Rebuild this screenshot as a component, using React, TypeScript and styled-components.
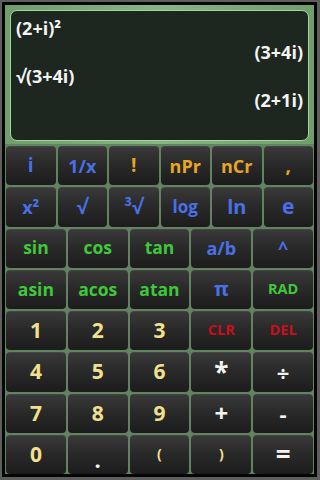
import React from "react";
import styled, { createGlobalStyle } from "styled-components";

const Global = createGlobalStyle`
  html, body { margin: 0; padding: 0; background: #5e5e5e; }
  body { font-family: "Open Sans", "DejaVu Sans", sans-serif; }
`;

const Outer = styled.div`
  width: 320px;
  height: 480px;
  box-sizing: border-box;
  padding: 2px 3px 3px 2px;
  background: #5e5e5e;
`;

const Frame = styled.div`
  height: 100%;
  box-sizing: border-box;
  padding: 3px;
  background: #050505;
`;

const Body = styled.div`
  height: 100%;
  display: flex;
  flex-direction: column;
  background: #62835f;
`;

const DisplayWrap = styled.div`
  height: 139px;
  flex: none;
  box-sizing: border-box;
  padding: 5px 5px 3px 5px;
  background: linear-gradient(90deg, #6f9d6c, #86b482 50%, #6f9d6c);
`;

const Screen = styled.div`
  height: 100%;
  box-sizing: border-box;
  border-radius: 7px;
  border: 1px solid #a6d4a0;
  background: #1d271f;
  padding: 5px 5px 0 5px;
  display: flex;
  flex-direction: column;
`;

const Line = styled.div<{ $right?: boolean }>`
  height: 24px;
  line-height: 24px;
  font-size: 18px;
  font-weight: 700;
  color: #f4f4f4;
  text-align: ${(p) => (p.$right ? "right" : "left")};
  white-space: nowrap;
`;

const Keypad = styled.div`
  flex: 1;
  display: flex;
  flex-direction: column;
  gap: 2px;
  padding: 2px 1px 0 1px;
  background: #62835f;
`;

const Row = styled.div<{ $cols: number }>`
  flex: 1;
  display: grid;
  grid-template-columns: repeat(${(p) => p.$cols}, 1fr);
  gap: 2px;
`;

const colors: Record<string, string> = {
  blue: "#4a6fe6",
  gold: "#e8a624",
  green: "#3fc83a",
  red: "#c8101c",
  cream: "#f2e08e",
  white: "#f4f4f4",
};

const Key = styled.button<{ $c: string; $size: number; $low?: boolean }>`
  all: unset;
  display: flex;
  align-items: center;
  justify-content: center;
  box-sizing: border-box;
  padding-top: ${(p) => (p.$low ? "9px" : "0")};
  border-radius: 4px;
  background: linear-gradient(180deg, #3a3a3a 0%, #2a2a2a 45%, #1c1c1c 100%);
  box-shadow: inset 0 1px 0 rgba(255, 255, 255, 0.06);
  color: ${(p) => colors[p.$c]};
  font-family: "Open Sans", "DejaVu Sans", sans-serif;
  font-weight: 700;
  font-size: ${(p) => p.$size}px;
  line-height: 1;
`;

type K = [string, string, number?];

const rows: K[][] = [
  [["i", "blue", 19], ["1/x", "blue", 18], ["!", "gold", 19], ["nPr", "gold", 18], ["nCr", "gold", 18], [",", "gold", 19]],
  [["x²", "blue", 18], ["√", "blue", 20], ["³√", "blue", 20], ["log", "blue", 17], ["ln", "blue", 20], ["e", "blue", 21]],
  [["sin", "green", 17.5], ["cos", "green", 17.5], ["tan", "green", 17.5], ["a/b", "blue", 18], ["^", "blue", 18]],
  [["asin", "green", 17.5], ["acos", "green", 17.5], ["atan", "green", 17.5], ["π", "blue", 20], ["RAD", "green", 14.5]],
  [["1", "cream", 21], ["2", "cream", 21], ["3", "cream", 21], ["CLR", "red", 14.5], ["DEL", "red", 14.5]],
  [["4", "cream", 21], ["5", "cream", 21], ["6", "cream", 21], ["*", "white", 26], ["÷", "white", 22]],
  [["7", "cream", 21], ["8", "cream", 21], ["9", "cream", 21], ["+", "white", 24], ["-", "white", 22]],
  [["0", "cream", 21], [".", "white", 22], ["(", "cream", 14], [")", "cream", 14], ["=", "white", 26]],
];

export default function App() {
  return (
    <>
      <Global />
      <Outer>
        <Frame>
          <Body>
            <DisplayWrap>
              <Screen>
                <Line>(2+i)²</Line>
                <Line $right>(3+4i)</Line>
                <Line>√(3+4i)</Line>
                <Line $right>(2+1i)</Line>
              </Screen>
            </DisplayWrap>
            <Keypad>
              {rows.map((r, i) => (
                <Row key={i} $cols={r.length}>
                  {r.map(([label, c, size]) => (
                    <Key key={label} $c={c} $size={size ?? 16} $low={label === "."}>
                      {label}
                    </Key>
                  ))}
                </Row>
              ))}
            </Keypad>
          </Body>
        </Frame>
      </Outer>
    </>
  );
}
